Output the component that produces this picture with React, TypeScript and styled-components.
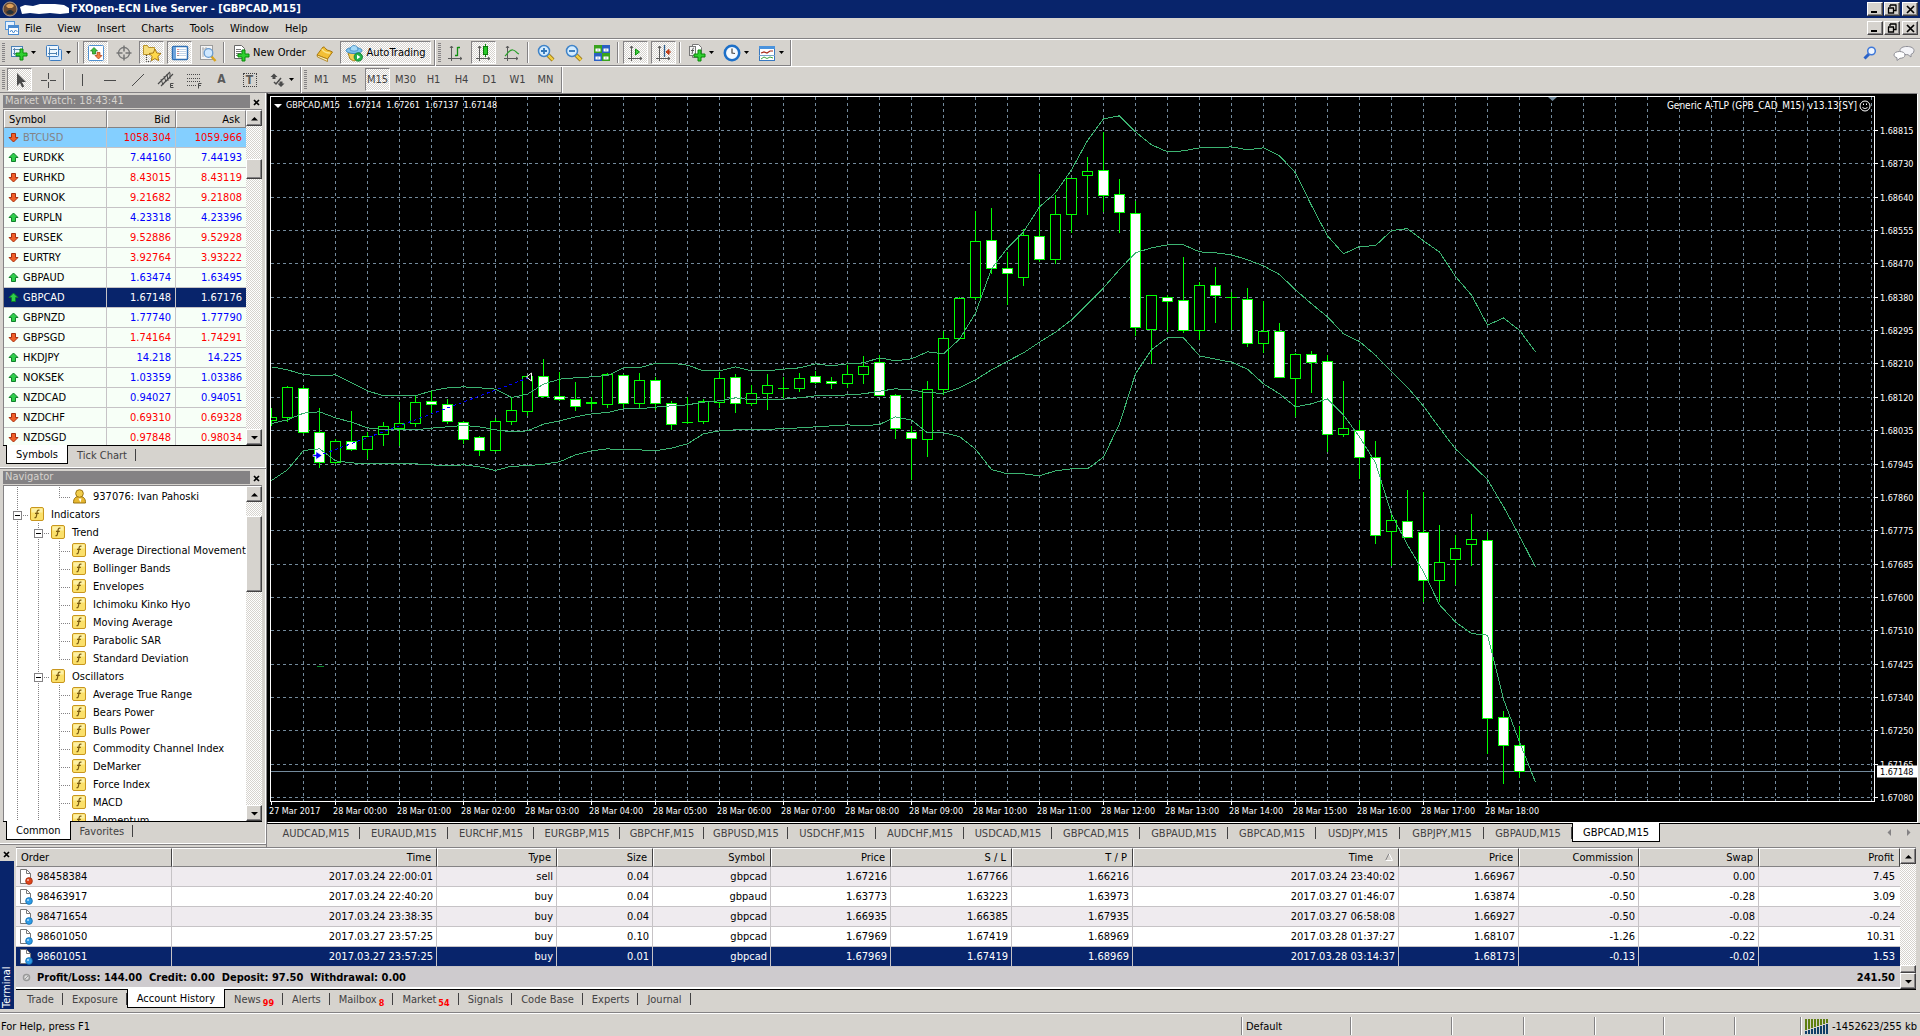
import React from "react";
import styled, { createGlobalStyle, css } from "styled-components";

const FACE = "#d6d3ce";
const NAVY = "#08246b";
const SHADOW = "#848284";
const DARK = "#424142";
const FONT = `"DejaVu Sans Condensed", "DejaVu Sans", "Noto Sans", sans-serif`;

const Global = createGlobalStyle`
  * { box-sizing: border-box; }
  html, body { margin: 0; background: ${FACE}; }
  body, button, table { font-family: ${FONT}; font-size: 11px; line-height: 13px; color: #000; }
  button { border: 0; padding: 0; margin: 0; background: transparent; white-space: nowrap; }
  svg { display: block; flex: none; }
`;

const checker = css`
  background: repeating-conic-gradient(#fff 0 25%, ${FACE} 0 50%) 0 0 / 2px 2px;
`;
const raised = css`
  background: ${FACE};
  border: 1px solid;
  border-color: #fff ${DARK} ${DARK} #fff;
  box-shadow: inset -1px -1px 0 ${SHADOW};
`;

const Shell = styled.div`
  display: flex;
  flex-direction: column;
  height: 100vh;
  min-width: 1000px;
  overflow: hidden;
  background: ${FACE};
`;

/* ---------- title and menu ---------- */
const TitleBar = styled.header`
  display: flex;
  align-items: center;
  flex: none;
  height: 18px;
  padding: 0 2px;
  background: ${NAVY};
  color: #fff;
`;
const Title = styled.h1`
  flex: 1;
  margin: 0;
  font-size: 11px;
  line-height: 16px;
  font-weight: bold;
`;
const MenuBar = styled.nav`
  display: flex;
  align-items: center;
  flex: none;
  height: 21px;
  padding: 0 2px 0 5px;
  border-bottom: 1px solid ${SHADOW};
`;
const MenuItems = styled.div`
  display: flex;
  flex: 1;
  gap: 16px;
  padding-left: 6px;
`;
const MenuItem = styled.button`
  font-size: 11px;
`;
const Caption = styled.div`
  display: flex;
  gap: 1px;
`;
const CaptionButton = styled.button<{ $gap?: boolean }>`
  ${raised}
  width: 16px;
  height: 14px;
  margin-left: ${(p) => (p.$gap ? 1 : 0)}px;
  display: grid;
  place-items: center;
`;

/* ---------- toolbars ---------- */
const ToolRow = styled.div`
  display: flex;
  flex: none;
  height: 27px;
  border-top: 1px solid #fff;
`;
const ToolGroup = styled.div`
  display: flex;
  align-items: center;
  padding: 0 2px 0 5px;
  border-right: 1px solid ${SHADOW};
  border-bottom: 1px solid ${SHADOW};
  box-shadow: 1px 0 0 #fff;
  margin-right: 1px;
  position: relative;
  &::before {
    content: "";
    position: absolute;
    left: 2px;
    top: 3px;
    bottom: 3px;
    width: 3px;
    background: repeating-linear-gradient(${SHADOW} 0 1px, transparent 1px 2px);
  }
`;
const Tool = styled.button<{ $w?: number; $on?: boolean; $muted?: boolean }>`
  display: flex;
  align-items: center;
  justify-content: center;
  gap: 3px;
  width: ${(p) => (p.$w ?? 28) - 3}px;
  height: 23px;
  margin: 0 1px 0 2px;
  border: 1px solid transparent;
  ${(p) =>
    p.$on &&
    css`
      ${checker}
      border-color: ${SHADOW} #fff #fff ${SHADOW};
    `}
  ${(p) => p.$muted && `color: ${DARK};`}
`;
const Divider = styled.span`
  width: 2px;
  height: 21px;
  margin: 0 2px;
  border-left: 1px solid ${SHADOW};
  border-right: 1px solid #fff;
`;
const ToolEnd = styled.div`
  display: flex;
  align-items: center;
  gap: 13px;
  margin-left: auto;
  padding-right: 5px;
`;

/* ---------- docks ---------- */
const Main = styled.main`
  display: flex;
  flex: 1;
  min-height: 0;
`;
const Sidebar = styled.aside`
  display: flex;
  flex-direction: column;
  gap: 1px;
  flex: none;
  width: 267px;
  padding-bottom: 3px;
  border-right: 1px solid ${SHADOW};
`;
const Dock = styled.section`
  display: flex;
  flex-direction: column;
  flex: 1 1 0;
  min-height: 0;
  padding: 2px 3px 0 3px;
  border: solid;
  border-width: 0 1px 1px 0;
  border-color: #fff;
  box-shadow: 0 1px 0 ${SHADOW};
`;
const DockTitle = styled.div`
  display: flex;
  justify-content: space-between;
  flex: none;
  height: 13px;
  margin-bottom: 1px;
`;
const DockName = styled.h2`
  flex: 1;
  margin: 0;
  padding-left: 2px;
  background: ${SHADOW};
  color: ${FACE};
  font-size: 11px;
  font-weight: normal;
  line-height: 12px;
`;
const CloseButton = styled.button`
  display: grid;
  place-items: center;
  width: 12px;
  height: 14px;
`;
const ListFrame = styled.div<{ $bg?: string }>`
  display: flex;
  flex: 1;
  min-height: 0;
  border-top: 1px solid ${SHADOW};
  border-left: 1px solid ${SHADOW};
  background: ${(p) => p.$bg ?? "#fff"};
`;
const ListBody = styled.div`
  flex: 1;
  min-width: 0;
  overflow: hidden;
`;
const ScrollTrack = styled.div`
  ${checker}
  display: flex;
  flex-direction: column;
  flex: none;
  width: 16px;
`;
const ScrollButton = styled.button`
  ${raised}
  display: grid;
  place-items: center;
  width: 16px;
  height: 16px;
`;
const ScrollThumb = styled.div<{ $before: number; $size: number }>`
  ${raised}
  height: ${(p) => p.$size}px;
  margin-top: ${(p) => p.$before}px;
  margin-bottom: auto;
`;

/* ---------- tab strips ---------- */
const TabStrip = styled.div<{ $indent: number; $height: number }>`
  display: flex;
  align-items: flex-start;
  flex: none;
  height: ${(p) => p.$height}px;
  padding-left: ${(p) => p.$indent}px;
  border-top: 1px solid #000;
`;
const Tab = styled.button<{ $active?: boolean; $w?: number }>`
  position: relative;
  height: 18px;
  padding: 0 9px;
  ${(p) => p.$w && `width: ${p.$w}px; padding: 0;`}
  color: ${(p) => (p.$active ? "#000" : DARK)};
  ${(p) =>
    p.$active
      ? css`
          background: #fff;
          border: solid #000;
          border-width: 0 1px 1px 1px;
          height: 19px;
          margin-top: -1px;
        `
      : css`
          &::after {
            content: "";
            position: absolute;
            right: 0;
            top: 3px;
            height: 12px;
            border-right: 1px solid ${DARK};
          }
        `}
`;
const Badge = styled.sub`
  margin-left: 2px;
  color: #f00;
  font-size: 9px;
  font-weight: bold;
  line-height: 0;
`;

/* ---------- market watch ---------- */
const QuoteTable = styled.table`
  width: 100%;
  border-collapse: separate;
  border-spacing: 0;
  table-layout: fixed;
`;
const HeadCell = styled.th<{ $left?: boolean; $w?: number }>`
  height: 18px;
  padding: 0 5px 0 4px;
  ${(p) => p.$w && `width: ${p.$w}px;`}
  font-weight: normal;
  text-align: ${(p) => (p.$left ? "left" : "right")};
  background: ${FACE};
  border: 1px solid;
  border-color: #fff ${SHADOW} ${SHADOW} #fff;
  white-space: nowrap;
`;
const QuoteRow = styled.tr<{ $bg: string; $name: string; $value: string }>`
  background: ${(p) => p.$bg};
  color: ${(p) => p.$value};
  td:first-child { color: ${(p) => p.$name}; }
`;
const QuoteCell = styled.td<{ $last?: boolean }>`
  height: 20px;
  padding: 0 4px 0 3px;
  text-align: right;
  border-bottom: 1px solid #c6c3c6;
  ${(p) => !p.$last && "border-right: 1px solid #c6c3c6;"}
`;
const NameCell = styled.div`
  display: flex;
  align-items: center;
  gap: 3px;
`;

/* ---------- navigator ---------- */
const Tree = styled.ul`
  margin: 0;
  padding: 1px 0 0 3px;
  list-style: none;
`;
const TreeItem = styled.li`
  display: flex;
  align-items: center;
  height: 18px;
  white-space: nowrap;
`;
type GuideKind = "line" | "tee" | "end" | "box" | "none";
const DOT_V = `repeating-linear-gradient(${SHADOW} 0 1px, transparent 1px 2px)`;
const DOT_H = `repeating-linear-gradient(90deg, ${SHADOW} 0 1px, transparent 1px 2px)`;
const Guide = styled.span<{ $kind: GuideKind }>`
  display: flex;
  align-items: center;
  width: 21px;
  height: 18px;
  padding-left: 6px;
  flex: none;
  background-repeat: no-repeat;
  ${(p) => {
    if (p.$kind === "none") return "";
    if (p.$kind === "line") return `background-image: ${DOT_V}; background-size: 1px 18px; background-position: 10px 0;`;
    const h = p.$kind === "end" ? 10 : 18;
    return `background-image: ${DOT_V}, ${DOT_H}; background-size: 1px ${h}px, 11px 1px; background-position: 10px 0, 10px 10px;`;
  }}
`;
const TreeLabel = styled.span`
  margin-left: 6px;
`;
const TreeIcon = styled.span`
  margin-left: 2px;
`;

/* ---------- chart ---------- */
const ChartColumn = styled.section`
  display: flex;
  flex-direction: column;
  flex: 1;
  min-width: 0;
`;
const ChartFrame = styled.div`
  flex: 1;
  min-height: 0;
  display: grid;
  grid-template-columns: 1fr 42px;
  grid-template-rows: 1fr 20px;
  padding: 2px 0 0 2px;
  background: #000;
  border: 1px solid;
  border-color: ${SHADOW} #fff #fff #000;
  margin-right: 2px;
  overflow: hidden;
`;
const Plot = styled.div`
  position: relative;
  border: 1px solid #fff;
  overflow: hidden;
`;
const ChartCaption = styled.div<{ $right?: boolean }>`
  position: absolute;
  top: 2px;
  ${(p) => (p.$right ? "right: 3px; font-size: 10px; gap: 2px;" : "left: 2px; font-size: 9px; gap: 3px;")}
  display: flex;
  align-items: center;
  color: #fff;
  line-height: 13px;
  white-space: pre;
`;
const AxisX = styled.div`
  min-width: 0;
  padding-left: 1px;
`;
const AxisY = styled.div`
  overflow: hidden;
  padding-top: 1px;
`;
const TabScroll = styled.div`
  display: flex;
  gap: 12px;
  margin-left: auto;
  padding: 5px 8px 0 0;
`;

/* ---------- terminal ---------- */
const Terminal = styled.section`
  display: flex;
  flex: none;
`;
const TerminalGrip = styled.div`
  display: flex;
  flex-direction: column;
  width: 16px;
  padding: 0 2px 3px 0;
`;
const TerminalName = styled.h2`
  flex: 1;
  display: flex;
  justify-content: flex-start;
  align-items: center;
  margin: 0;
  padding-top: 1px;
  background: ${NAVY};
  color: #fff;
  font-size: 11px;
  font-weight: normal;
  line-height: 14px;
  writing-mode: vertical-rl;
  transform: rotate(180deg);
`;
const TerminalBody = styled.div`
  flex: 1;
  min-width: 0;
  display: flex;
  flex-direction: column;
  padding-right: 4px;
`;
const HistoryFrame = styled.div`
  display: flex;
  border-top: 1px solid ${SHADOW};
  background: #fff;
`;
const HistoryTable = styled.table`
  width: 100%;
  border-collapse: separate;
  border-spacing: 0;
  table-layout: fixed;
  margin-bottom: 2px;
`;
const HistoryHead = styled(HeadCell)`
  height: 19px;
  border-color: #fff ${DARK} ${SHADOW} #fff;
`;
const HistoryRow = styled.tr<{ $bg: string; $fg?: string }>`
  background: ${(p) => p.$bg};
  color: ${(p) => p.$fg ?? "#000"};
`;
const HistoryCell = styled.td`
  height: 20px;
  padding: 0 3px;
  text-align: right;
  white-space: nowrap;
  border-bottom: 1px solid #c6c3c6;
  &:not(:last-child) { border-right: 1px solid #c6c3c6; }
  &:last-child { padding-right: 5px; }
`;
const SummaryCell = styled.td<{ $right?: boolean }>`
  height: 20px;
  padding: 0 5px 0 6px;
  background: #cecbce;
  font-weight: bold;
  text-align: ${(p) => (p.$right ? "right" : "left")};
  white-space: pre;
`;
const SummaryLine = styled.div`
  display: flex;
  align-items: center;
  gap: 6px;
`;
const Sort = styled.span`
  display: inline-flex;
  padding-left: 12px;
`;

/* ---------- status bar ---------- */
const StatusBar = styled.footer`
  display: flex;
  flex: none;
  height: 24px;
  padding: 4px 0 1px;
  border-top: 1px solid ${SHADOW};
  box-shadow: inset 0 1px 0 #fff;
`;
const StatusCell = styled.div<{ $w?: number }>`
  display: flex;
  align-items: center;
  gap: 3px;
  padding: 0 3px 0 1px;
  ${(p) => (p.$w ? `flex: none; width: ${p.$w}px;` : "flex: 1;")}
  &:not(:first-child) {
    padding-left: 4px;
    border-left: 1px solid ${SHADOW};
    box-shadow: inset 1px 0 0 #fff;
  }
`;

/* ================= icons ================= */
const Svg = ({ w = 18, h = 18, children }: { w?: number; h?: number; children: React.ReactNode }) => (
  <svg width={w} height={h} viewBox={`0 0 ${w} ${h}`} fill="none" aria-hidden="true">
    {children}
  </svg>
);
const Caret = () => (
  <Svg w={5} h={3}><path d="M0 0h5L2.500 3z" fill="#000" /></Svg>
);
const Plus = ({ x, y }: { x: number; y: number }) => (
  <path d={`M${x + 4} ${y}h3v4h4v3h-4v4h-3v-4h-4v-3h4z`} fill="#2fd02f" stroke="#0b8a0b" />
);
const Axes = () => (
  <path d="M4.500 2v12M1 14.500h14M3 4l1.500-2L6 4M13 13l2 1.500-2 1.500M4.500 14v3" stroke="#5a5a5a" />
);
const IconNewChart = () => (
  <Svg w={18} h={18}>
    <rect x="1.500" y="2.500" width="11" height="10" fill="#eaf4ff" stroke="#4a7fb5" />
    <path d="M4.500 4v7M3 9.500h9M3 5.500h7" stroke="#5b87b0" />
    <Plus x={6} y={5} />
  </Svg>
);
const IconWindows = () => (
  <Svg>
    <rect x="4.500" y="5.500" width="12" height="11" rx="1" fill="#d7eaff" stroke="#3e7cbf" />
    <rect x="1.500" y="1.500" width="12" height="11" rx="1" fill="#eef7ff" stroke="#3e7cbf" />
    <path d="M4.500 3.500v8M3 9.500h9M11.500 8v3M4 5.500h8" stroke="#4f81b0" />
  </Svg>
);
const IconMarket = () => (
  <Svg>
    <rect x="1.500" y="1.500" width="15" height="15" rx="1" fill="#fff" stroke="#4f90d0" />
    <path d="M7 3.500l3.500 3.500h-2v3h-3v-3h-2z" fill="#3fbf3f" stroke="#157a15" strokeWidth=".7" />
    <path d="M11.500 15L8 11.500h2v-3h3v3h2z" fill="#f08040" stroke="#b03a10" strokeWidth=".7" />
  </Svg>
);
const IconTarget = () => (
  <Svg>
    <circle cx="9" cy="9" r="5.500" stroke="#757575" strokeWidth="1.300" />
    <path d="M9 1.500v6M9 10.500v6M1.500 9h6M10.500 9h6" stroke="#757575" strokeWidth="1.500" />
  </Svg>
);
const IconFavorites = () => (
  <Svg w={20}>
    <path d="M1.500 1.500h4l1 2h6v7h-11z" fill="#f7dd7a" stroke="#b8922a" />
    <path d="M4.500 11v6.500h4" stroke="#444" strokeDasharray="1 1" />
    <path d="M13 5l1.800 4 4.200.5-3.100 2.900.8 4.300-3.700-2.100-3.700 2.100.8-4.300L7 9.500l4.200-.5z" fill="#ffd84a" stroke="#a87a12" />
  </Svg>
);
const IconNavigator = () => (
  <Svg>
    <rect x="1.500" y="2.500" width="15" height="13" rx="1" fill="#fff" stroke="#2f6fb5" strokeWidth="1.500" />
    <rect x="2" y="3" width="3" height="12" fill="#6ea4dc" />
    <path d="M8 5.500h7M8 7.500h7M8 9.500h7M8 11.500h7" stroke="#c2d4e8" />
    <path d="M6.500 5.500h1M6.500 9.500h1" stroke="#e02020" /><path d="M6.500 7.500h1M6.500 11.500h1" stroke="#222" />
  </Svg>
);
const IconTester = () => (
  <Svg w={20}>
    <rect x="2.500" y="1.500" width="12" height="14" fill="#f4f4f4" stroke="#9c9c9c" />
    <path d="M4 5h8M5 3v10M8 3v6" stroke="#b0b0b0" />
    <path d="M13 12l4.500 5" stroke="#d9a520" strokeWidth="2.500" />
    <circle cx="10.500" cy="9" r="4.300" fill="#cfe8ff" stroke="#6a9cd0" strokeWidth="1.300" />
  </Svg>
);
const IconOrder = () => (
  <Svg>
    <path d="M2.500 1.500h7l3 3v10h-10z" fill="#fff" stroke="#666" />
    <path d="M4 5.500h5M4 7.500h7M4 9.500h5M4 11.500h3" stroke="#777" />
    <Plus x={6} y={6} />
  </Svg>
);
const IconBook = () => (
  <Svg>
    <path d="M1 11l6-8c2-.5 2.500 2 4 3 2 .5 4 1 5.500 2l-5 7z" fill="#f3bf35" stroke="#a8780e" />
    <path d="M1 11l10.500 4v2.500L1.500 13z" fill="#fdf0b8" stroke="#a8780e" strokeWidth=".8" />
    <path d="M6 5c1 2 3 4 8 4" stroke="#fbe58c" strokeWidth="1.500" />
  </Svg>
);
const IconAuto = () => (
  <Svg>
    <path d="M3 9h12l-2 6-4 2-4-2z" fill="#f2cf55" stroke="#b08a20" />
    <ellipse cx="9" cy="6.500" rx="8" ry="3" fill="#7ec3ee" stroke="#3c88bf" />
    <path d="M5 6c0-6 8-6 8 0-2 1.500-6 1.500-8 0z" fill="#a6daf7" stroke="#3c88bf" strokeWidth=".8" />
    <circle cx="13.300" cy="13" r="4.200" fill="#22b14c" stroke="#0d7d2c" strokeWidth=".8" />
    <path d="M12 10.800v4.400l3.400-2.200z" fill="#fff" />
  </Svg>
);
const IconBars = () => (
  <Svg><Axes /><path d="M10.500 3v9M10.500 3.500H13M8 11.500h2.500" stroke="#109010" strokeWidth="1.300" /></Svg>
);
const IconCandles = () => (
  <Svg><Axes /><path d="M10.500 0v13" stroke="#0b8a0b" /><rect x="8.500" y="2.500" width="4" height="8" fill="#28c828" stroke="#0b7a0b" /></Svg>
);
const IconLine = () => (
  <Svg><Axes /><path d="M2 12c3-3 5-7 8-6 3 .5 3 3 6 4" stroke="#2aa02a" strokeWidth="1.200" /></Svg>
);
const IconZoom = ({ plus }: { plus?: boolean }) => (
  <Svg>
    <path d="M11 11l5 5" stroke="#8a6a10" strokeWidth="4" /><path d="M11 11l5 5" stroke="#f0cc40" strokeWidth="2.500" />
    <circle cx="7" cy="7" r="5.500" fill="#d4ecff" stroke="#3f83c8" strokeWidth="1.500" />
    <path d={plus ? "M4 7h6M7 4v6" : "M4 7h6"} stroke="#2f75b8" strokeWidth="1.800" />
  </Svg>
);
const IconTiles = () => (
  <Svg>
    <rect x="1" y="1" width="8" height="8" fill="#39a31d" /><rect x="9" y="1" width="8" height="8" fill="#2b5fc4" />
    <rect x="1" y="9" width="8" height="8" fill="#2b5fc4" /><rect x="9" y="9" width="8" height="8" fill="#39a31d" />
    <path d="M2.500 4.500h5v3h-5zM10.500 4.500h5v3h-5zM2.500 12.500h5v3h-5zM10.500 12.500h5v3h-5z" fill="#fff" />
    <path d="M4 6h2M12 6h2M4 14h2M12 14h2" stroke="#a8b8c8" />
  </Svg>
);
const IconScroll = () => (
  <Svg><Axes /><path d="M8.500 5v6l4-3z" fill="#3fd03f" stroke="#0f8f0f" /></Svg>
);
const IconShift = () => (
  <Svg><Axes /><path d="M9.500 1v12" stroke="#2f5f8f" strokeWidth="1.300" /><path d="M16 8h-3M14 5.500L11 8l3 2.500z" fill="#e04a1c" stroke="#b0300c" /></Svg>
);
const IconIndicators = () => (
  <Svg>
    <path d="M4.500.500h6l3 3v10h-9z" fill="#fff" stroke="#777" /><rect x="1.500" y="2.500" width="6" height="9" fill="#f4f4f4" stroke="#777" />
    <path d="M6 4c-2 0-1 3-2 6M3 6.500h3" stroke="#555" />
    <Plus x={6} y={6} />
  </Svg>
);
const IconClock = () => (
  <Svg>
    <circle cx="9" cy="9" r="7.200" fill="#f4faff" stroke="#1c6fc8" strokeWidth="2.500" />
    <path d="M9 4.500V9l3 .500" stroke="#444" strokeWidth="1.200" />
  </Svg>
);
const IconTemplate = () => (
  <Svg>
    <rect x="1.500" y="2.500" width="15" height="14" fill="#fff" stroke="#3878c0" /><path d="M1 3.500h16" stroke="#4b93dd" strokeWidth="3" />
    <path d="M3 9l3-1 3 1 3-2 3 0" stroke="#a82a18" strokeWidth="1.200" /><path d="M1 11.500h16" stroke="#7aa6cc" />
    <path d="M3 15l3-2 3 1.500 3-1.500 3 1" stroke="#3fa53f" />
  </Svg>
);
const IconSearch = () => (
  <Svg w={14} h={14}><path d="M1.500 12.500L6 8" stroke="#2a62c8" strokeWidth="3" /><circle cx="8.500" cy="5" r="3.800" fill="#eef5ff" stroke="#3f78d8" strokeWidth="1.500" /></Svg>
);
const IconChat = () => (
  <Svg w={22} h={16}>
    <path d="M14 1.500c4 0 7 1.500 7 4s-2 3.500-3 3.800V12l-3-2.300c-5 0-8-1.500-8-4.200s3-4 7-4z" fill="#f4f4f8" stroke="#8e8e96" />
    <path d="M6.500 6.500c3 0 5.500 1.200 5.500 3.500s-2.500 3.300-5 3.300L4 15.500v-2.700C2.500 12.300 1 11.500 1 10c0-2.300 2.500-3.500 5.500-3.500z" fill="#fff" stroke="#8e8e96" />
  </Svg>
);
const IconArrow = () => (
  <Svg><path d="M6 2v13l3-3 2.200 4.500 2-1L11 11h4z" fill="#4a4a4a" /></Svg>
);
const Stroke = ({ d }: { d: string }) => (
  <Svg><path d={d} stroke="#4a4a4a" /></Svg>
);
const IconChannel = () => (
  <Svg>
    <path d="M1 13L13 1M4 15L16 3" stroke="#4a4a4a" strokeWidth="1.200" /><path d="M4 8l2 6M7 5l2 6M10 3l1 7M13 2l0 6" stroke="#4a4a4a" />
    <path d="M16.500 12.500h-3v4h3M13.500 14.500h2.500" stroke="#4a4a4a" />
  </Svg>
);
const IconFibo = () => (
  <Svg>
    <path d="M2 3.500h14M2 7.500h14M2 10.500h14M2 14.500h9" stroke="#4a4a4a" strokeDasharray="1 1" />
    <path d="M16.500 12.500h-3v5M13.500 14.500h2.500" stroke="#4a4a4a" />
  </Svg>
);
const IconArrows = () => (
  <Svg>
    <path d="M6 2.500l3.500 3.500h-2v2h-3V6h-2zM13 16l-3.500-3.500h2v-2h3v2h2z" fill="#4a4a4a" />
    <path d="M6 11l2 2 5-6" stroke="#4a4a4a" strokeWidth="1.500" />
  </Svg>
);
const GlyphBold = styled.span`
  font-weight: bold;
  font-size: 12px;
  color: #5a5a5a;
`;
const BoxedGlyph = styled(GlyphBold)`
  width: 14px;
  height: 14px;
  line-height: 12px;
  border: 1px dotted ${DARK};
`;
const IconMin = () => <Svg w={10} h={10}><path d="M1 8h6" stroke="#000" strokeWidth="2" /></Svg>;
const IconRestore = () => (
  <Svg w={10} h={10}><path d="M3 1h6M3 1v2M9 .5V6.500H7M1 4h6M1.500 4v5h5V4" stroke="#000" strokeWidth="1.300" /></Svg>
);
const IconX = ({ s = 8 }: { s?: number }) => (
  <Svg w={s} h={s}><path d={`M1 1l${s - 2} ${s - 2}M${s - 1} 1L1 ${s - 1}`} stroke="#000" strokeWidth="1.700" /></Svg>
);
const IconUpDown = ({ up }: { up?: boolean }) => (
  <Svg w={13} h={13}>
    {up ? (
      <path d="M6.500 2l4.500 4.500H8.500v4h-4v-4H2z" fill="#2fcf4a" stroke="#0f7f2a" />
    ) : (
      <path d="M6.500 11L11 6.500H8.500v-4h-4v4H2z" fill="#f06028" stroke="#a83010" />
    )}
  </Svg>
);
const IconFunction = () => (
  <Svg w={15} h={15}>
    <rect x=".5" y=".5" width="13" height="13" rx="1.500" fill="#fbe06a" stroke="#c8961e" />
    <path d="M1.500 1.500h11v4h-11z" fill="#fdf0a4" />
    <path d="M9.500 3.200c-3-1-2.300 3-3 5.500-.3 1.800-.8 2.200-2 1.900M5 6.300h3.800" stroke="#7a5a10" strokeWidth="1.200" />
  </Svg>
);
const IconUser = () => (
  <Svg w={15} h={15}>
    <path d="M1.500 14c0-5 2-6.500 6-6.500s6 1.500 6 6.500z" fill="#e8b830" stroke="#9a7410" /><circle cx="7.500" cy="4.500" r="3.800" fill="#f2cd4c" stroke="#9a7410" />
    <path d="M6.500 9.500l2 4 1-4" fill="#fff" />
  </Svg>
);
const IconDeal = ({ sell }: { sell?: boolean }) => (
  <Svg w={15} h={18}>
    <path d="M1.500 1.500h6l4 4v10h-10z" fill="#fff" stroke="#777" /><path d="M7.500 1.500v4h4" stroke="#777" />
    <circle cx="10" cy="13" r="3.400" fill={sell ? "#e0431a" : "#2d9be8"} stroke={sell ? "#9a2a0a" : "#11669f"} strokeWidth=".7" />
    <circle cx="9" cy="12" r="1" fill="#fff" opacity=".7" />
  </Svg>
);
const IconToggle = () => (
  <Svg w={15} h={15}><rect x=".5" y="4.500" width="8" height="8" fill="#fff" stroke={SHADOW} /><path d="M2 8.500h5" stroke="#000" /></Svg>
);
const Tri = ({ d, color = "#000" }: { d: "up" | "down" | "left" | "right"; color?: string }) => {
  const paths = { up: "M0 5.500h7L3.500 2z", down: "M0 2h7L3.500 5.500z", left: "M5 0v7L1.500 3.500z", right: "M2 0v7l3.500-3.500z" };
  return <Svg w={7} h={7}><path d={paths[d]} fill={color} /></Svg>;
};

/* ================= data ================= */
type Quote = [string, string, string, 0 | 1];
const quotes: Quote[] = [
  ["BTCUSD", "1058.304", "1059.966", 0], ["EURDKK", "7.44160", "7.44193", 1], ["EURHKD", "8.43015", "8.43119", 0],
  ["EURNOK", "9.21682", "9.21808", 0], ["EURPLN", "4.23318", "4.23396", 1], ["EURSEK", "9.52886", "9.52928", 0],
  ["EURTRY", "3.92764", "3.93222", 0], ["GBPAUD", "1.63474", "1.63495", 1], ["GBPCAD", "1.67148", "1.67176", 1],
  ["GBPNZD", "1.77740", "1.77790", 1], ["GBPSGD", "1.74164", "1.74291", 0], ["HKDJPY", "14.218", "14.225", 1],
  ["NOKSEK", "1.03359", "1.03386", 1], ["NZDCAD", "0.94027", "0.94051", 1], ["NZDCHF", "0.69310", "0.69328", 0],
  ["NZDSGD", "0.97848", "0.98034", 0],
];
const quoteColors = (q: Quote) => {
  if (q[0] === "BTCUSD") return { $bg: "#84cfff", $name: "#848284", $value: "#f00" };
  if (q[0] === "GBPCAD") return { $bg: NAVY, $name: "#fff", $value: "#fff" };
  const value = q[3] && q[0] !== "NOKSEK" ? "#00f" : q[3] ? "#00f" : "#f00";
  return { $bg: "#f7fff7", $name: "#000", $value: value };
};

const leaf = (label: string, last = false): [string, GuideKind[]] => [label, ["line", "line", last ? "end" : "tee"]];
const tree: [string, GuideKind[]][] = [
  ["937076: Ivan Pahoski", ["line", "none", "end"]],
  ["Indicators", ["box"]],
  ["Trend", ["line", "box"]],
  leaf("Average Directional Movement Index"), leaf("Bollinger Bands"), leaf("Envelopes"), leaf("Ichimoku Kinko Hyo"),
  leaf("Moving Average"), leaf("Parabolic SAR"), leaf("Standard Deviation", true),
  ["Oscillators", ["line", "box"]],
  leaf("Average True Range"), leaf("Bears Power"), leaf("Bulls Power"), leaf("Commodity Channel Index"),
  leaf("DeMarker"), leaf("Force Index"), leaf("MACD"), leaf("Momentum"),
];

const chartTabs: [string, number][] = [
  ["AUDCAD,M15", 88], ["EURAUD,M15", 88], ["EURCHF,M15", 86], ["EURGBP,M15", 86], ["GBPCHF,M15", 84], ["GBPUSD,M15", 84],
  ["USDCHF,M15", 88], ["AUDCHF,M15", 88], ["USDCAD,M15", 88], ["GBPCAD,M15", 88], ["GBPAUD,M15", 88], ["GBPCAD,M15", 88],
  ["USDJPY,M15", 84], ["GBPJPY,M15", 84], ["GBPAUD,M15", 88], ["GBPCAD,M15", 88],
];
const terminalTabs: [string, string?][] = [
  ["Trade"], ["Exposure"], ["Account History"], ["News", "99"], ["Alerts"], ["Mailbox", "8"], ["Market", "54"],
  ["Signals"], ["Code Base"], ["Experts"], ["Journal"],
];

const history = [
  ["98458384", "2017.03.24 22:00:01", "sell", "0.04", "gbpcad", "1.67216", "1.67766", "1.66216", "2017.03.24 23:40:02", "1.66967", "-0.50", "0.00", "7.45"],
  ["98463917", "2017.03.24 22:40:20", "buy", "0.04", "gbpaud", "1.63773", "1.63223", "1.63973", "2017.03.27 01:46:07", "1.63874", "-0.50", "-0.28", "3.09"],
  ["98471654", "2017.03.24 23:38:35", "buy", "0.04", "gbpcad", "1.66935", "1.66385", "1.67935", "2017.03.27 06:58:08", "1.66927", "-0.50", "-0.08", "-0.24"],
  ["98601050", "2017.03.27 23:57:25", "buy", "0.10", "gbpcad", "1.67969", "1.67419", "1.68969", "2017.03.28 01:37:27", "1.68107", "-1.26", "-0.22", "10.31"],
  ["98601051", "2017.03.27 23:57:25", "buy", "0.01", "gbpcad", "1.67969", "1.67419", "1.68969", "2017.03.28 03:14:37", "1.68173", "-0.13", "-0.02", "1.53"],
];
const historyCols: [string, number?][] = [
  ["Order", 156], ["Time", 265], ["Type", 120], ["Size", 96], ["Symbol", 118], ["Price", 120], ["S / L", 121], ["T / P", 121],
  ["Time", 266], ["Price", 120], ["Commission", 120], ["Swap", 120], ["Profit"],
];

/* Candle: high, body top, body bottom, low, falling (1) or rising (0). */
type Candle = [number, number, number, number, 0 | 1];
const scaled = (k: number, shift: number, rows: Candle[]): Candle[] =>
  rows.map(([h, t, b, l, f]) => [...[h, t, b, l].map((v) => Math.round(v / k + shift)), f] as Candle);
const candles: Candle[] = [
  ...scaled(3, -7, [
    [955, 982, 991, 1006, 0], [887, 892, 982, 994, 0], [887, 895, 1027, 1030, 1], [955, 1027, 1117, 1130, 1],
    [1048, 1054, 1117, 1120, 0], [964, 1054, 1078, 1080, 1], [1027, 1039, 1078, 1105, 0], [995, 1009, 1033, 1064, 0],
    [936, 1000, 1015, 1064, 0], [915, 937, 1000, 1008, 0], [904, 934, 943, 967, 1], [928, 943, 994, 1000, 1],
    [994, 997, 1048, 1058, 1], [1038, 1042, 1081, 1094, 1], [983, 994, 1081, 1084, 0], [922, 961, 994, 1001, 0],
    [855, 859, 964, 976, 0], [806, 859, 919, 922, 1], [847, 919, 928, 931, 1], [876, 928, 949, 959, 1],
    [920, 937, 940, 958, 1], [850, 853, 943, 952, 0], [853, 856, 940, 952, 1], [850, 871, 940, 950, 0],
    [862, 871, 940, 956, 1], [934, 940, 1003, 1017, 1], [922, 997, 997, 1000, 1], [926, 934, 994, 1000, 0],
    [847, 865, 937, 950, 0], [852, 862, 940, 965, 1], [885, 910, 940, 944, 0], [852, 886, 910, 956, 0],
    [862, 895, 895, 922, 1], [850, 865, 895, 902, 0], [844, 859, 877, 880, 1],
  ]),
  ...scaled(3, 3, [
    [831, 844, 850, 864, 1], [795, 823, 850, 860, 0], [768, 799, 823, 850, 0], [765, 787, 886, 886, 1],
    [882, 886, 985, 1014, 1], [978, 997, 1015, 1137, 1], [843, 868, 1018, 1068, 0], [693, 715, 868, 882, 0],
    [592, 595, 715, 716, 0], [332, 424, 592, 598, 0], [324, 421, 505, 518, 1], [457, 505, 520, 611, 1],
    [388, 406, 532, 555, 0], [223, 409, 478, 482, 1], [285, 343, 478, 488, 0], [235, 235, 343, 395, 0],
    [171, 214, 226, 342, 0], [97, 211, 286, 333, 1], [237, 283, 337, 396, 1], [303, 340, 682, 705, 1],
    [585, 586, 688, 789, 0], [585, 592, 604, 693, 1], [471, 601, 691, 696, 1], [546, 556, 691, 716, 0],
    [501, 556, 586, 666, 1], [576, 592, 592, 687, 1], [564, 598, 730, 738, 1], [604, 694, 730, 755, 0],
    [669, 694, 832, 832, 1], [759, 763, 835, 949, 0], [753, 763, 787, 876, 1], [766, 784, 1003, 1052, 1],
    [843, 985, 1003, 1007, 0],
  ]),
  ...scaled(2.529, 143, [
    [456, 480, 550, 602, 1], [508, 548, 745, 766, 1], [690, 707, 737, 823, 0], [632, 710, 750, 750, 1],
    [637, 739, 860, 913, 1], [721, 815, 861, 912, 0], [747, 780, 808, 870, 0], [693, 757, 770, 823, 0],
    [738, 758, 1210, 1297, 1], [1191, 1207, 1276, 1373, 1], [1230, 1278, 1344, 1357, 1],
  ]),
];

/* Bollinger Bands: one y value for each bar. */
const band = (a: number[], b: number[], c: number[]) => [
  ...a.map((v) => v / 3 - 7), ...b.map((v) => v / 3 + 3), ...c.map((v) => v / 2.529 + 143),
];
const bands = [
  band(
    [829, 838, 852, 856, 853, 877, 901, 916, 916, 916, 901, 892, 889, 892, 896, 921, 911, 881, 866, 862, 859, 855, 832, 832, 818, 818, 824, 841, 841, 829, 841, 841, 836, 832],
    [790, 796, 790, 787, 772, 781, 775, 754, 760, 716, 638, 505, 442, 394, 319, 277, 208, 120, 55, 46, 94, 133, 154, 151, 142, 142, 139, 148, 142, 166, 217, 315, 406, 460, 438],
    [13, -25, -30, 1, 29, 91, 138, 214, 196, 227, 282]
  ),
  band(
    [999, 988, 968, 964, 982, 995, 1012, 1017, 1018, 1018, 1013, 1009, 1005, 1009, 1018, 1024, 1021, 1001, 991, 979, 970, 966, 955, 955, 950, 946, 943, 935, 931, 922, 928, 928, 926, 922],
    [886, 886, 883, 880, 872, 865, 868, 877, 878, 862, 838, 808, 782, 757, 725, 695, 658, 611, 562, 507, 457, 442, 433, 433, 454, 457, 463, 478, 496, 522, 568, 610, 649, 700, 723],
    [290, 332, 371, 419, 474, 527, 565, 605, 673, 747, 826]
  ),
  band(
    [1170, 1138, 1080, 1075, 1111, 1117, 1120, 1120, 1120, 1120, 1123, 1126, 1123, 1129, 1140, 1127, 1126, 1121, 1114, 1093, 1081, 1075, 1078, 1078, 1081, 1073, 1060, 1030, 1021, 1018, 1016, 1016, 1015, 1012],
    [979, 976, 973, 976, 972, 949, 959, 997, 997, 1008, 1046, 1107, 1120, 1120, 1126, 1111, 1105, 1105, 1070, 970, 820, 748, 712, 712, 766, 776, 785, 806, 850, 880, 919, 910, 895, 944, 1009],
    [562, 692, 770, 838, 921, 965, 994, 998, 1160, 1268, 1370]
  ),
];

const prices = [68815, 68730, 68640, 68555, 68470, 68380, 68295, 68210, 68120, 68035, 67945, 67860, 67775, 67685, 67600, 67510, 67425, 67340, 67250, 67165, 67080];
const priceY = (i: number) => Math.round(33 + i * 33.35) + 0.5;
const BAR = 16;
const LAST_Y = 674.5;
const dates = ["27 Mar 2017", ...Array.from({ length: 19 }, (_, i) => `28 Mar ${String(i).padStart(2, "0")}:00`)];

/* ================= chart drawing ================= */
const PlotSvg = styled.svg`
  width: 100%;
  height: 100%;
`;
const TimeSvg = styled(PlotSvg)`
  overflow: visible;
`;
const AxisText = styled.text`
  font-family: ${FONT};
  font-size: 9px;
`;

const PricePlot = () => (
  <PlotSvg role="img" aria-label="GBPCAD M15 candlestick chart with Bollinger Bands">
    <g shapeRendering="crispEdges">
      <g stroke="#738a9c" strokeDasharray="3 3">
        {Array.from({ length: 110 }, (_, i) => <line key={i} x1={32.5 + i * 32} x2={32.5 + i * 32} y1="0" y2="100%" />)}
        {prices.map((p, i) => <line key={p} x1="0" x2="100%" y1={priceY(i)} y2={priceY(i)} />)}
      </g>
      <line x1="0" x2="100%" y1={LAST_Y} y2={LAST_Y} stroke="#738a9c" />
      {candles.map(([h, t, b, l, falling], i) => (
        <g key={i} stroke="#0f0" fill={falling ? "#fff" : "#000"}>
          <path d={`M${i * BAR + 0.5} ${h}V${t}M${i * BAR + 0.5} ${b}V${l + 1}`} />
          {t === b ? (
            <path d={`M${i * BAR - 5} ${t + 0.5}h11`} />
          ) : (
            <rect x={i * BAR - 4.5} y={t + 0.5} width="10" height={b - t} />
          )}
        </g>
      ))}
      {bands.map((ys, n) => (
        <polyline key={n} points={ys.map((y, i) => `${i * BAR + 0.5},${y + 0.5}`).join(" ")} fill="none" stroke="#3cb371" />
      ))}
      <path d="M47 359L257 281" stroke="#00f" strokeDasharray="3 3" />
      <path d="M46 569.500h7" stroke="#0a8a2a" />
    </g>
    <path d="M42 357.500h3v-3l6 4-6 4v-3h-3z" fill="#00f" stroke="#fff" strokeWidth=".6" />
    <path d="M260.500 276v8l-5-4z" fill="#000" stroke="#fff" />
    <path d="M1277 0h9l-4.500 4z" fill="#738a9c" />
  </PlotSvg>
);

const Smiley = () => (
  <Svg w={12} h={12}>
    <circle cx="6" cy="6" r="5" stroke="#fff" /><path d="M3.500 7c.8 2 4.200 2 5 0M4.500 3.500v1.500M7.500 3.500v1.500" stroke="#fff" />
  </Svg>
);

/* ================= parts ================= */
const WindowButtons = () => (
  <Caption>
    <CaptionButton aria-label="Minimize"><IconMin /></CaptionButton>
    <CaptionButton aria-label="Restore"><IconRestore /></CaptionButton>
    <CaptionButton $gap aria-label="Close"><IconX s={9} /></CaptionButton>
  </Caption>
);

const Scrollbar = ({ before, size }: { before: number; size: number }) => (
  <ScrollTrack>
    <ScrollButton aria-label="Scroll up"><Tri d="up" /></ScrollButton>
    <ScrollThumb $before={before} $size={size} />
    <ScrollButton aria-label="Scroll down"><Tri d="down" /></ScrollButton>
  </ScrollTrack>
);

const periods = ["M1", "M5", "M15", "M30", "H1", "H4", "D1", "W1", "MN"];

const Toolbars = () => (
  <>
    <ToolRow>
      <ToolGroup>
        <Tool $w={35} aria-label="New chart"><IconNewChart /><Caret /></Tool>
        <Tool $w={35} aria-label="Profiles"><IconWindows /><Caret /></Tool>
        <Divider />
        <Tool $on aria-label="Market Watch"><IconMarket /></Tool>
        <Tool aria-label="Data Window"><IconTarget /></Tool>
        <Tool $on aria-label="Navigator"><IconFavorites /></Tool>
        <Tool $on aria-label="Terminal"><IconNavigator /></Tool>
        <Tool aria-label="Strategy Tester"><IconTester /></Tool>
        <Divider />
        <Tool $w={83}><IconOrder />New Order</Tool>
        <Tool aria-label="MetaEditor"><IconBook /></Tool>
        <Tool $w={94} $on><IconAuto />AutoTrading</Tool>
      </ToolGroup>
      <ToolGroup>
        <Tool aria-label="Bar chart"><IconBars /></Tool>
        <Tool $on aria-label="Candlesticks"><IconCandles /></Tool>
        <Tool aria-label="Line chart"><IconLine /></Tool>
        <Divider />
        <Tool aria-label="Zoom in"><IconZoom plus /></Tool>
        <Tool aria-label="Zoom out"><IconZoom /></Tool>
        <Tool aria-label="Tile windows"><IconTiles /></Tool>
        <Divider />
        <Tool $on aria-label="Auto scroll"><IconScroll /></Tool>
        <Tool $on aria-label="Chart shift"><IconShift /></Tool>
        <Divider />
        <Tool $w={35} aria-label="Indicators"><IconIndicators /><Caret /></Tool>
        <Tool $w={35} aria-label="Periods"><IconClock /><Caret /></Tool>
        <Tool $w={35} aria-label="Templates"><IconTemplate /><Caret /></Tool>
      </ToolGroup>
      <ToolEnd>
        <Tool $w={17} aria-label="Search"><IconSearch /></Tool>
        <Tool $w={24} aria-label="Community chat"><IconChat /></Tool>
      </ToolEnd>
    </ToolRow>
    <ToolRow>
      <ToolGroup>
        <Tool $on aria-label="Cursor"><IconArrow /></Tool>
        <Tool aria-label="Crosshair"><Stroke d="M9.500 2v6M9.500 11v6M2 9.500h6M11 9.500h6" /></Tool>
        <Divider />
        <Tool aria-label="Vertical line"><Stroke d="M9.500 3v12" /></Tool>
        <Tool aria-label="Horizontal line"><Stroke d="M3 9.500h12" /></Tool>
        <Tool aria-label="Trendline"><Stroke d="M3 15L15 3" /></Tool>
        <Tool aria-label="Equidistant channel"><IconChannel /></Tool>
        <Tool aria-label="Fibonacci retracement"><IconFibo /></Tool>
        <Tool><GlyphBold>A</GlyphBold></Tool>
        <Tool><BoxedGlyph>T</BoxedGlyph></Tool>
        <Tool $w={35} aria-label="Arrows"><IconArrows /><Caret /></Tool>
      </ToolGroup>
      <ToolGroup>
        {periods.map((p) => <Tool key={p} $muted $on={p === "M15"}>{p}</Tool>)}
      </ToolGroup>
    </ToolRow>
  </>
);

const MarketWatch = () => (
  <Dock>
    <DockTitle>
      <DockName>Market Watch: 18:43:41</DockName>
      <CloseButton aria-label="Close Market Watch"><IconX s={7} /></CloseButton>
    </DockTitle>
    <ListFrame $bg="#f7fff7">
      <ListBody>
        <QuoteTable>
          <thead>
            <tr><HeadCell $left $w={103}>Symbol</HeadCell><HeadCell $w={69}>Bid</HeadCell><HeadCell>Ask</HeadCell></tr>
          </thead>
          <tbody>
            {quotes.map((q) => (
              <QuoteRow key={q[0]} {...quoteColors(q)}>
                <QuoteCell><NameCell><IconUpDown up={!!q[3]} />{q[0]}</NameCell></QuoteCell>
                <QuoteCell>{q[1]}</QuoteCell>
                <QuoteCell $last>{q[2]}</QuoteCell>
              </QuoteRow>
            ))}
          </tbody>
        </QuoteTable>
      </ListBody>
      <Scrollbar before={33} size={20} />
    </ListFrame>
    <TabStrip $indent={3} $height={22}>
      <Tab $active>Symbols</Tab>
      <Tab>Tick Chart</Tab>
    </TabStrip>
  </Dock>
);

const Navigator = () => (
  <Dock>
    <DockTitle>
      <DockName>Navigator</DockName>
      <CloseButton aria-label="Close Navigator"><IconX s={7} /></CloseButton>
    </DockTitle>
    <ListFrame>
      <ListBody>
        <Tree>
          {tree.map(([label, guides], i) => (
            <TreeItem key={label}>
              {guides.map((g, n) => <Guide key={n} $kind={g}>{g === "box" && <IconToggle />}</Guide>)}
              <TreeIcon>{i === 0 ? <IconUser /> : <IconFunction />}</TreeIcon>
              <TreeLabel>{label}</TreeLabel>
            </TreeItem>
          ))}
        </Tree>
      </ListBody>
      <Scrollbar before={14} size={76} />
    </ListFrame>
    <TabStrip $indent={3} $height={22}>
      <Tab $active>Common</Tab>
      <Tab>Favorites</Tab>
    </TabStrip>
  </Dock>
);

const Chart = () => (
  <ChartColumn>
    <ChartFrame>
      <Plot>
        <PricePlot />
        <ChartCaption>
          <Svg w={10} h={6}><path d="M1 1h8L5 5z" fill="#fff" /></Svg>
          {"GBPCAD,M15   1.67214  1.67261  1.67137  1.67148"}
        </ChartCaption>
        <ChartCaption $right>Generic A-TLP (GPB_CAD_M15) v13.13[SY]<Smiley /></ChartCaption>
      </Plot>
      <AxisY>
        <PlotSvg>
          {prices.map((p, i) => (
            <g key={p}>
              <path d={`M0 ${priceY(i)}h3`} stroke="#fff" />
              <AxisText x="5" y={priceY(i) + 3} fill="#fff">{`1.${p}`}</AxisText>
            </g>
          ))}
          <rect x="2" y={LAST_Y - 6} width="40" height="12" fill="#fff" />
          <AxisText x="5" y={LAST_Y + 3} fill="#000">1.67148</AxisText>
        </PlotSvg>
      </AxisY>
      <AxisX>
        <TimeSvg>
          {dates.map((d, i) => (
            <g key={d}>
              <path d={`M${i * 64 + 0.5} 0v3`} stroke="#fff" />
              <AxisText x={i * 64 - 2} y="12" fill="#fff">{d}</AxisText>
            </g>
          ))}
        </TimeSvg>
      </AxisX>
    </ChartFrame>
    <TabStrip $indent={5} $height={24}>
      {chartTabs.map(([t, w], i) => <Tab key={i} $w={w} $active={i === chartTabs.length - 1}>{t}</Tab>)}
      <TabScroll><Tri d="left" color={SHADOW} /><Tri d="right" color={SHADOW} /></TabScroll>
    </TabStrip>
  </ChartColumn>
);

const TerminalPanel = () => (
  <Terminal>
    <TerminalGrip>
      <CloseButton aria-label="Close Terminal"><IconX s={7} /></CloseButton>
      <TerminalName>Terminal</TerminalName>
    </TerminalGrip>
    <TerminalBody>
      <HistoryFrame>
        <HistoryTable>
          <thead>
            <tr>
              {historyCols.map(([name, w], i) => (
                <HistoryHead key={i} $w={w} $left={i === 0}>
                  {name}
                  {i === 8 && <Sort><Svg w={8} h={8}><path d="M.500 7.500L4 .500" stroke={SHADOW} /><path d="M4 .500l3.500 7h-7" stroke="#fff" /></Svg></Sort>}
                </HistoryHead>
              ))}
            </tr>
          </thead>
          <tbody>
            {history.map((row, r) => (
              <HistoryRow key={row[0]} $bg={r === 4 ? NAVY : r % 2 ? "#fff" : "#efebef"} $fg={r === 4 ? "#fff" : undefined}>
                {row.map((v, c) => (
                  <HistoryCell key={c}>
                    {c === 0 ? <NameCell><IconDeal sell={row[2] === "sell"} />{v}</NameCell> : v}
                  </HistoryCell>
                ))}
              </HistoryRow>
            ))}
            <tr>
              <SummaryCell colSpan={12}>
                <SummaryLine>
                  <Svg w={9} h={9}><circle cx="4.500" cy="4.500" r="3" fill="#ddd" stroke="#999" strokeWidth="1.500" /><path d="M3 6l3-3" stroke="#999" /></Svg>
                  {"Profit/Loss: 144.00  Credit: 0.00  Deposit: 97.50  Withdrawal: 0.00"}
                </SummaryLine>
              </SummaryCell>
              <SummaryCell $right>241.50</SummaryCell>
            </tr>
          </tbody>
        </HistoryTable>
        <Scrollbar before={101} size={8} />
      </HistoryFrame>
      <TabStrip $indent={2} $height={23}>
        {terminalTabs.map(([t, n]) => (
          <Tab key={t} $active={t === "Account History"}>{t}{n && <Badge>{n}</Badge>}</Tab>
        ))}
      </TabStrip>
    </TerminalBody>
  </Terminal>
);

const App = () => (
  <Shell>
    <Global />
    <TitleBar>
      <Svg w={69} h={18}>
        <circle cx="8" cy="9" r="7" fill="#6b4a32" stroke="#c8b49a" strokeWidth=".8" />
        <path d="M4 6c2-3 6-3 8 0l-2 2H6z" fill="#e0a25a" /><path d="M4 12c2 3 6 3 8 0l-3-2H7z" fill="#23303a" />
        <path d="M18 7l5-2 8 1 7-2h15l9 1 5 3v5l-9 1-10-1-11 1-9-1-8 1z" fill="#fff" />
      </Svg>
      <Title>FXOpen-ECN Live Server - [GBPCAD,M15]</Title>
      <WindowButtons />
    </TitleBar>
    <MenuBar>
      <Svg w={14} h={14}>
        <rect x=".5" y=".5" width="9" height="8" fill="#e4f1ff" stroke="#5a98d8" />
        <rect x="3.500" y="4.500" width="10" height="9" fill="#fff" stroke="#4a8ad0" />
        <path d="M3.500 6h10" stroke="#4a8ad0" strokeWidth="2" /><path d="M5 11l1.500-2 2 3 2-3 2 2" stroke="#4a8ad0" />
      </Svg>
      <MenuItems>
        {["File", "View", "Insert", "Charts", "Tools", "Window", "Help"].map((m) => <MenuItem key={m}>{m}</MenuItem>)}
      </MenuItems>
      <WindowButtons />
    </MenuBar>
    <Toolbars />
    <Main>
      <Sidebar>
        <MarketWatch />
        <Navigator />
      </Sidebar>
      <Chart />
    </Main>
    <TerminalPanel />
    <StatusBar>
      <StatusCell>For Help, press F1</StatusCell>
      <StatusCell $w={109}>Default</StatusCell>
      <StatusCell $w={101} />
      <StatusCell $w={72} />
      <StatusCell $w={71} />
      <StatusCell $w={69} />
      <StatusCell $w={71} />
      <StatusCell $w={66} />
      <StatusCell $w={120}>
        <Svg w={24} h={16}>
          {Array.from({ length: 8 }, (_, i) => (
            <g key={i}>
              <rect x={i * 3} y="1" width="2" height={11 - i} fill="#5f7f10" />
              <rect x={i * 3} y={13 - i} width="2" height={3 + i} fill="#103f68" />
            </g>
          ))}
        </Svg>
        -1452623/255 kb
      </StatusCell>
    </StatusBar>
  </Shell>
);

export default App;
